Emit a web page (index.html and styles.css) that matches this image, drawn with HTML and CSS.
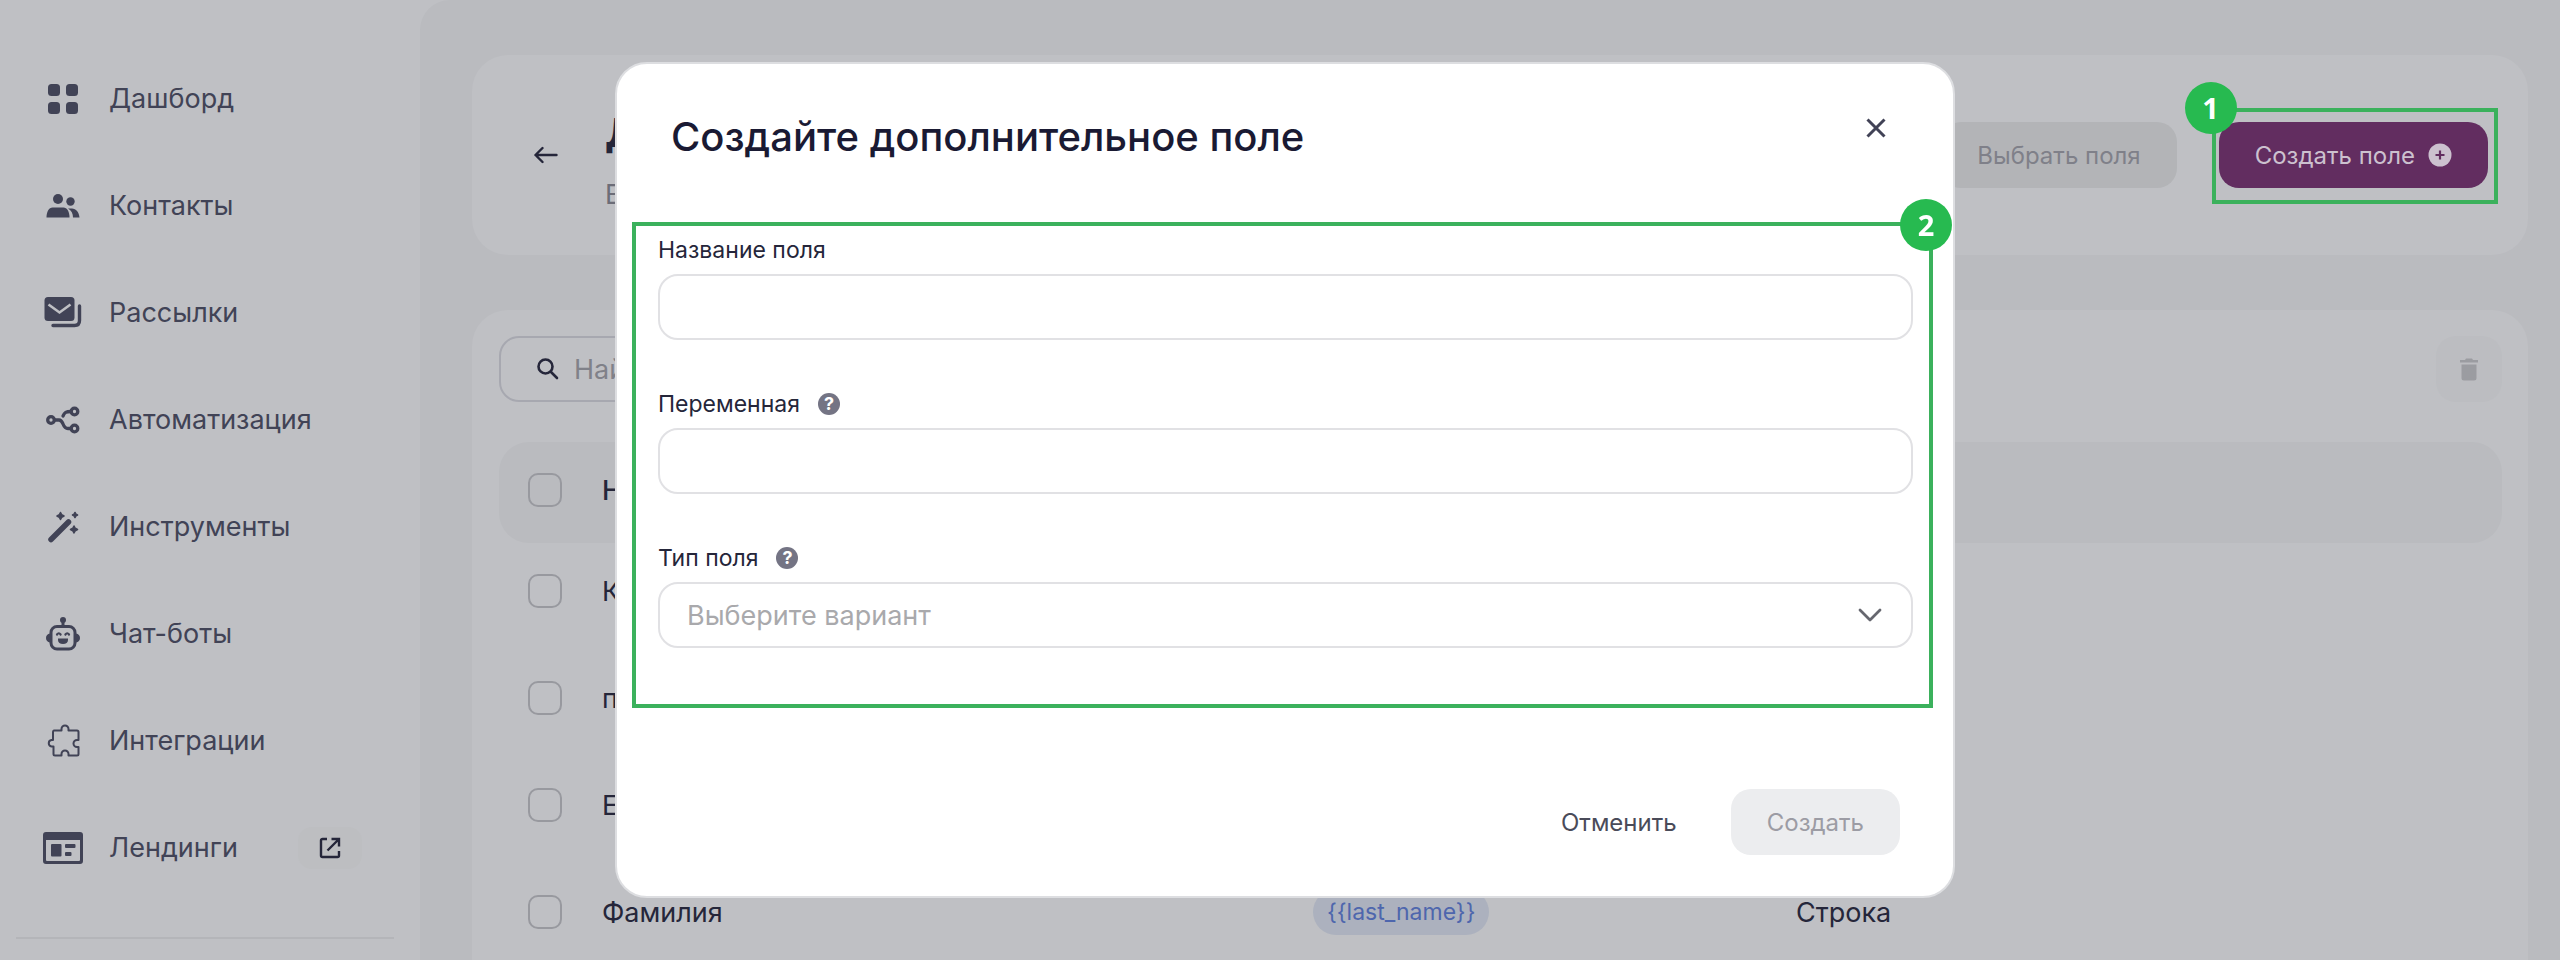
FILE: index.html
```html
<!DOCTYPE html>
<html lang="ru">
<head>
  <meta charset="UTF-8" />
  <meta name="viewport" content="width=device-width, initial-scale=1.0"/>
  <title>Дополнительные поля</title>
  <link rel="stylesheet" href="styles.css">
</head>
<body>
  <div class="app">
    <aside class="sidebar">
      <nav class="menu">
        <a class="menu-item" href="#">
          <svg class="menu-icon" viewBox="0 0 40 40" fill="currentColor"><rect x="5" y="5" width="12" height="12" rx="3.500"/><rect x="23" y="5" width="12" height="12" rx="3.500"/><rect x="5" y="23" width="12" height="12" rx="3.500"/><rect x="23" y="23" width="12" height="12" rx="3.500"/></svg>
          Дашборд
        </a>
        <a class="menu-item" href="#">
          <svg class="menu-icon" viewBox="0 0 40 40" fill="currentColor"><circle cx="15" cy="13" r="5"/><circle cx="27.500" cy="15.500" r="4.200"/><path d="M3.500 31.500c0-6 2.500-10 6-10h11c3.500 0 6 4 6 10z"/><path d="M25 22.500h4c4 0 7 3.500 7.500 9H30c0-4-1.500-7-5-9z"/></svg>
          Контакты
        </a>
        <a class="menu-item" href="#">
          <svg class="menu-icon" viewBox="0 0 40 40" fill="none"><rect x="1.500" y="4" width="30" height="24" rx="3.500" fill="currentColor"/><path class="envelope-fold" d="M5.500 11.500l11 8 11-8" stroke-width="2.600"/><path d="M36.500 13v14.500c0 3-1.500 5-5 5H10" stroke="currentColor" stroke-width="3.400" stroke-linecap="round"/></svg>
          Рассылки
        </a>
        <a class="menu-item" href="#">
          <svg class="menu-icon" viewBox="0 0 40 40" fill="none" stroke="currentColor" stroke-width="3.300"><circle cx="8" cy="20" r="3.300"/><circle cx="31.500" cy="11.500" r="3.300"/><circle cx="31.500" cy="28.500" r="3.300"/><path d="M11.500 20H16c2.500 0 3 1.500 4 4 1.200 3 2.500 4.500 5 4.500h3M20 16c1.500-3.500 3-4.500 8-4.500" stroke-linecap="round"/></svg>
          Автоматизация
        </a>
        <a class="menu-item" href="#">
          <svg class="menu-icon" viewBox="0 0 40 40" fill="currentColor"><path d="M8 32.500L25.500 15" stroke="currentColor" stroke-width="5.500" stroke-linecap="round"/><path d="M17.500 5.500l1.200 2.300L21 9l-2.300 1.200-1.200 2.300-1.200-2.300L14 9l2.300-1.200zM32 5.500l.9 1.600 1.600.9-1.600.9-.9 1.600-.9-1.600-1.600-.9 1.600-.9zM31 19l1.200 2.300 2.300 1.200-2.300 1.200L31 26l-1.200-2.300-2.300-1.200 2.300-1.200z" stroke="currentColor" stroke-width="1.600" stroke-linejoin="round"/></svg>
          Инструменты
        </a>
        <a class="menu-item" href="#">
          <svg class="menu-icon" viewBox="0 0 40 40" fill="currentColor"><rect x="8" y="12.500" width="24" height="22.500" rx="6" fill="none" stroke="currentColor" stroke-width="3"/><circle cx="20" cy="6" r="3"/><path d="M18.500 7h3v6h-3zM7 19.500v9c-2.500-.5-4-2-4-4.500s1.500-4 4-4.500zM33 19.500v9c2.500-.5 4-2 4-4.500s-1.500-4-4-4.500z"/><path d="M14 20.500q1.800-2.500 3.600 0M22.400 20.500q1.800-2.500 3.600 0" fill="none" stroke="currentColor" stroke-width="2.200" stroke-linecap="round"/><path d="M15 24.500h10v1.500c0 2.500-2 4-5 4s-5-1.500-5-4z"/></svg>
          Чат-боты
        </a>
        <a class="menu-item" href="#">
          <svg class="menu-icon" viewBox="0 0 40 40" fill="none" stroke="currentColor" stroke-width="2" stroke-linejoin="round"><path d="M11 9.500h7.500V8a3.500 3.500 0 0 1 7 0v1.500H34a1.500 1.500 0 0 1 1.500 1.500v8H34a3.500 3.500 0 0 0 0 7h1.500v7A1.500 1.500 0 0 1 34 34.500h-8.500V33a3.500 3.500 0 0 0-7 0v1.500H12a1.500 1.500 0 0 1-1.500-1.500v-7.500H8.500a3.300 3.300 0 0 1 0-6.500H10v-8a1.500 1.500 0 0 1 1-1.500z"/></svg>
          Интеграции
        </a>
        <a class="menu-item" href="#">
          <svg class="menu-icon" viewBox="0 0 40 40" fill="currentColor"><path fill-rule="evenodd" d="M3 4h34a3 3 0 0 1 3 3v26a3 3 0 0 1-3 3H3a3 3 0 0 1-3-3V7a3 3 0 0 1 3-3zM3 12v20a1 1 0 0 0 1 1h32a1 1 0 0 0 1-1V12z"/><rect x="8" y="16" width="10.500" height="12.500" rx="1"/><rect x="22" y="16" width="10.500" height="4" rx="1"/><rect x="22" y="24" width="6.500" height="4" rx="1"/></svg>
          Лендинги
          <span class="external">
            <svg width="24" height="24" viewBox="0 0 24 24" fill="none" stroke="currentColor" stroke-width="2.400"><path d="M9 3H4.500A1.500 1.500 0 0 0 3 4.500v15A1.500 1.500 0 0 0 4.500 21h15a1.500 1.500 0 0 0 1.500-1.500V15M13.500 3H21v7.500M21 3L9.500 14.500"/></svg>
          </span>
        </a>
      </nav>
    </aside>

    <main class="content">
      <section class="panel page-head">
        <button class="back" type="button" aria-label="Назад">
          <svg width="24" height="24" viewBox="0 0 24 24" fill="none" stroke="currentColor" stroke-width="2.400" stroke-linecap="round" stroke-linejoin="round"><path d="M22.500 12H1.500M8.500 5l-7 7 7 7"/></svg>
        </button>
        <div class="page-title">
          <h1>Дополнительные поля</h1>
          <p>Все поля</p>
        </div>
        <div class="actions">
          <button class="btn btn-muted" type="button">Выбрать поля</button>
          <div class="marked">
            <button class="btn btn-primary" type="button">
              Создать поле
              <svg width="24" height="24" viewBox="0 0 24 24"><circle cx="12" cy="12" r="11.500" fill="currentColor"/><path class="plus" d="M12 7.500v9M7.500 12h9" stroke-width="2.200"/></svg>
            </button>
            <div class="frame"><span class="badge badge-left">1</span></div>
          </div>
        </div>
      </section>

      <section class="panel list">
        <div class="toolbar">
          <label class="search">
            <svg width="24" height="24" viewBox="0 0 24 24" fill="none" stroke="currentColor" stroke-width="2.600" stroke-linecap="round"><circle cx="9.500" cy="9.500" r="7"/><path d="M15 15l6 6"/></svg>
            <input type="text" placeholder="Найти поле" aria-label="Найти поле">
          </label>
          <button class="trash" type="button" aria-label="Удалить">
            <svg width="18" height="24" viewBox="0 0 18 24" fill="currentColor"><path d="M6 1.500h6l1 1.500h5v2.500H0V3h5zM1.500 7.500h15v13.500a2.500 2.500 0 0 1-2.500 2.500H4A2.500 2.500 0 0 1 1.500 21z"/></svg>
          </button>
        </div>
        <table class="fields-table">
          <thead>
            <tr>
              <th class="col-check"><input class="check" type="checkbox" aria-label="Выбрать все"></th>
              <th class="col-name">Название</th>
              <th class="col-var">Переменная</th>
              <th>Тип</th>
            </tr>
          </thead>
          <tbody>
            <tr>
              <td><input class="check" type="checkbox" aria-label="Компания"></td>
              <td>Компания</td><td></td><td></td>
            </tr>
            <tr>
              <td><input class="check" type="checkbox" aria-label="поле"></td>
              <td>поле</td><td></td><td></td>
            </tr>
            <tr>
              <td><input class="check" type="checkbox" aria-label="Email"></td>
              <td>Email</td><td></td><td></td>
            </tr>
            <tr>
              <td><input class="check" type="checkbox" aria-label="Фамилия"></td>
              <td>Фамилия</td>
              <td><span class="tag">{{last_name}}</span></td>
              <td>Строка</td>
            </tr>
          </tbody>
        </table>
      </section>
    </main>
  </div>

  <div class="overlay">
    <form class="modal" role="dialog" aria-labelledby="modalTitle">
      <header class="modal-head">
        <h2 id="modalTitle">Создайте дополнительное поле</h2>
        <button class="close" type="button" aria-label="Закрыть">
          <svg width="20" height="20" viewBox="0 0 20 20" fill="none" stroke="currentColor" stroke-width="3"><path d="M1.500 1.500l17 17M18.500 1.500l-17 17"/></svg>
        </button>
      </header>
      <div class="modal-fields">
        <span class="badge badge-right">2</span>
        <div class="field">
          <div class="field-label"><label for="fieldName">Название поля</label></div>
          <input class="control" id="fieldName" type="text">
        </div>
        <div class="field">
          <div class="field-label">
            <label for="fieldVar">Переменная</label>
            <span class="help">?</span>
          </div>
          <input class="control" id="fieldVar" type="text">
        </div>
        <div class="field">
          <div class="field-label">
            <label for="fieldType">Тип поля</label>
            <span class="help">?</span>
          </div>
          <div class="select-wrap">
            <select class="control" id="fieldType">
              <option>Выберите вариант</option>
            </select>
            <svg class="chevron" width="24" height="14" viewBox="0 0 24 14" fill="none" stroke="currentColor" stroke-width="2.800" stroke-linecap="round" stroke-linejoin="round"><path d="M2 2l10 10L22 2"/></svg>
          </div>
        </div>
      </div>
      <footer class="modal-foot">
        <button class="btn btn-text" type="button">Отменить</button>
        <button class="btn btn-disabled" type="submit" disabled>Создать</button>
      </footer>
    </form>
  </div>
</body>
</html>
```

FILE: styles.css
```css
* { margin: 0; padding: 0; box-sizing: border-box; }
body {
  font-family: Inter, "Noto Sans", sans-serif;
  font-size: 27px;
  color: #25263a;
  background: #bfc0c4;
}
button, input, select { font: inherit; color: inherit; border: none; background: none; }
button { cursor: pointer; }
svg { flex: none; display: block; }

.app {
  display: flex;
  height: 100vh;
  overflow: hidden;
}

/* sidebar */
.sidebar {
  flex: none;
  width: 420px;
  padding: 45px 26px 0 16px;
}
.menu { border-bottom: 2px solid #b4b5b9; padding-bottom: 36px; }
.menu-item {
  display: flex;
  align-items: center;
  gap: 26px;
  height: 107px;
  padding-left: 27px;
  color: #414356;
  text-decoration: none;
}
.menu-icon { width: 40px; height: 40px; }
.envelope-fold { stroke: #bfc0c4; }
.external {
  display: flex;
  align-items: center;
  justify-content: center;
  width: 64px;
  height: 42px;
  margin-left: auto;
  margin-right: 32px;
  border-radius: 14px;
  background: #bdbec1;
  color: #25263a;
}

/* content */
.content {
  flex: 1;
  padding: 55px 32px 0 52px;
  background: #babbbf;
  border-top-left-radius: 30px;
}
.panel {
  background: #bfc0c4;
  border-radius: 36px;
}
.page-head {
  display: flex;
  align-items: center;
  height: 200px;
  padding: 0 40px 0 62px;
  margin-bottom: 55px;
}
.back { margin-right: 47px; }
.page-title { padding-top: 10px; }
h1 { font-size: 40px; line-height: 48px; margin-bottom: 22px; }
.page-title p { line-height: 32px; color: #6c6d78; }
.actions { display: flex; gap: 42px; margin-left: auto; }
.btn {
  height: 66px;
  padding: 0 36px;
  border-radius: 20px;
  font-size: 24px;
}
.btn-muted { background: #b3b4b7; color: #7f8089; }
.btn-primary {
  display: flex;
  align-items: center;
  gap: 13px;
  background: #622d60;
  color: #ccc1cf;
}
.plus { stroke: #622d60; }
.marked { position: relative; }

/* numbered green marks */
.frame {
  position: absolute;
  inset: -14px -10px -16px -7px;
  border: 4px solid #3bb15c;
  pointer-events: none;
}
.badge {
  position: absolute;
  width: 52px;
  height: 52px;
  border-radius: 50%;
  background: #27ba50;
  color: white;
  font: bold 29px/52px "Noto Sans", sans-serif;
  text-align: center;
}
.badge-left { top: -30px; left: -31px; }
.badge-right { top: -27px; right: -23px; }

/* list */
.list { padding: 26px 26px 40px 27px; }
.toolbar {
  display: flex;
  justify-content: space-between;
  margin-bottom: 40px;
}
.search {
  display: flex;
  align-items: center;
  gap: 14px;
  width: 560px;
  height: 66px;
  padding: 0 35px;
  border: 2px solid #a7a8b0;
  border-radius: 20px;
}
.search input { width: 100%; outline: none; }
.search input::placeholder { color: #808189; opacity: 1; }
.trash {
  display: flex;
  align-items: center;
  justify-content: center;
  width: 66px;
  height: 66px;
  border-radius: 20px;
  background: #bcbdc1;
  color: #9b9ca1;
}
.fields-table {
  width: 100%;
  table-layout: fixed;
  border-collapse: collapse;
  text-align: left;
}
.col-check { width: 103px; }
.col-name { width: 711px; }
.col-var { width: 483px; }
.fields-table th {
  height: 101px;
  padding-bottom: 5px;
  background: #babbbf;
  font-weight: 500;
}
.fields-table th:first-child { border-radius: 30px 0 0 30px; }
.fields-table th:last-child { border-radius: 0 30px 30px 0; }
.fields-table td { height: 107px; padding-bottom: 11px; }
.check {
  appearance: none;
  display: block;
  width: 34px;
  height: 34px;
  margin-left: 29px;
  border: 2px solid #98999f;
  border-radius: 10px;
}
.tag {
  display: inline-block;
  padding: 0 14px;
  border-radius: 23px;
  background: #acb1be;
  color: #4e66ad;
  font-size: 23px;
  line-height: 46px;
}

/* modal */
.overlay {
  position: fixed;
  inset: 0;
  display: flex;
  align-items: center;
  justify-content: center;
  padding-left: 10px;
}
.modal {
  width: 1340px;
  border: 2px solid #dddee1;
  border-radius: 32px;
  background: white;
}
.modal-head {
  display: flex;
  align-items: flex-start;
  justify-content: space-between;
  padding: 44px 57px 56px 54px;
}
h2 { font-size: 40px; line-height: 58px; font-weight: 500; color: #1a1a33; }
.close {
  display: flex;
  align-items: center;
  justify-content: center;
  width: 40px;
  height: 40px;
  color: #414256;
}
.modal-fields {
  position: relative;
  display: flex;
  flex-direction: column;
  gap: 49px;
  margin: 0 20px 0 15px;
  padding: 9px 16px 56px 22px;
  border: 4px solid #3bb15c;
}
.field-label {
  display: flex;
  align-items: center;
  gap: 18px;
  margin-bottom: 9px;
  font-size: 23px;
  line-height: 30px;
}
.help {
  width: 22px;
  height: 22px;
  border-radius: 50%;
  background: #747484;
  color: white;
  font-size: 18px;
  font-weight: 700;
  line-height: 22px;
  text-align: center;
}
.control {
  display: block;
  width: 100%;
  height: 66px;
  padding: 0 27px;
  border: 2px solid #e1e1e4;
  border-radius: 20px;
}
.select-wrap { position: relative; }
.select-wrap select { appearance: none; color: #a9a9ac; }
.chevron {
  position: absolute;
  top: 26px;
  right: 31px;
  color: #66676f;
  pointer-events: none;
}
.modal-foot {
  display: flex;
  justify-content: flex-end;
  gap: 18px;
  padding: 81px 53px 41px;
}
.btn-text { color: #4a4b59; }
.btn-disabled { background: #ecedef; color: #9c9ca4; }
```
